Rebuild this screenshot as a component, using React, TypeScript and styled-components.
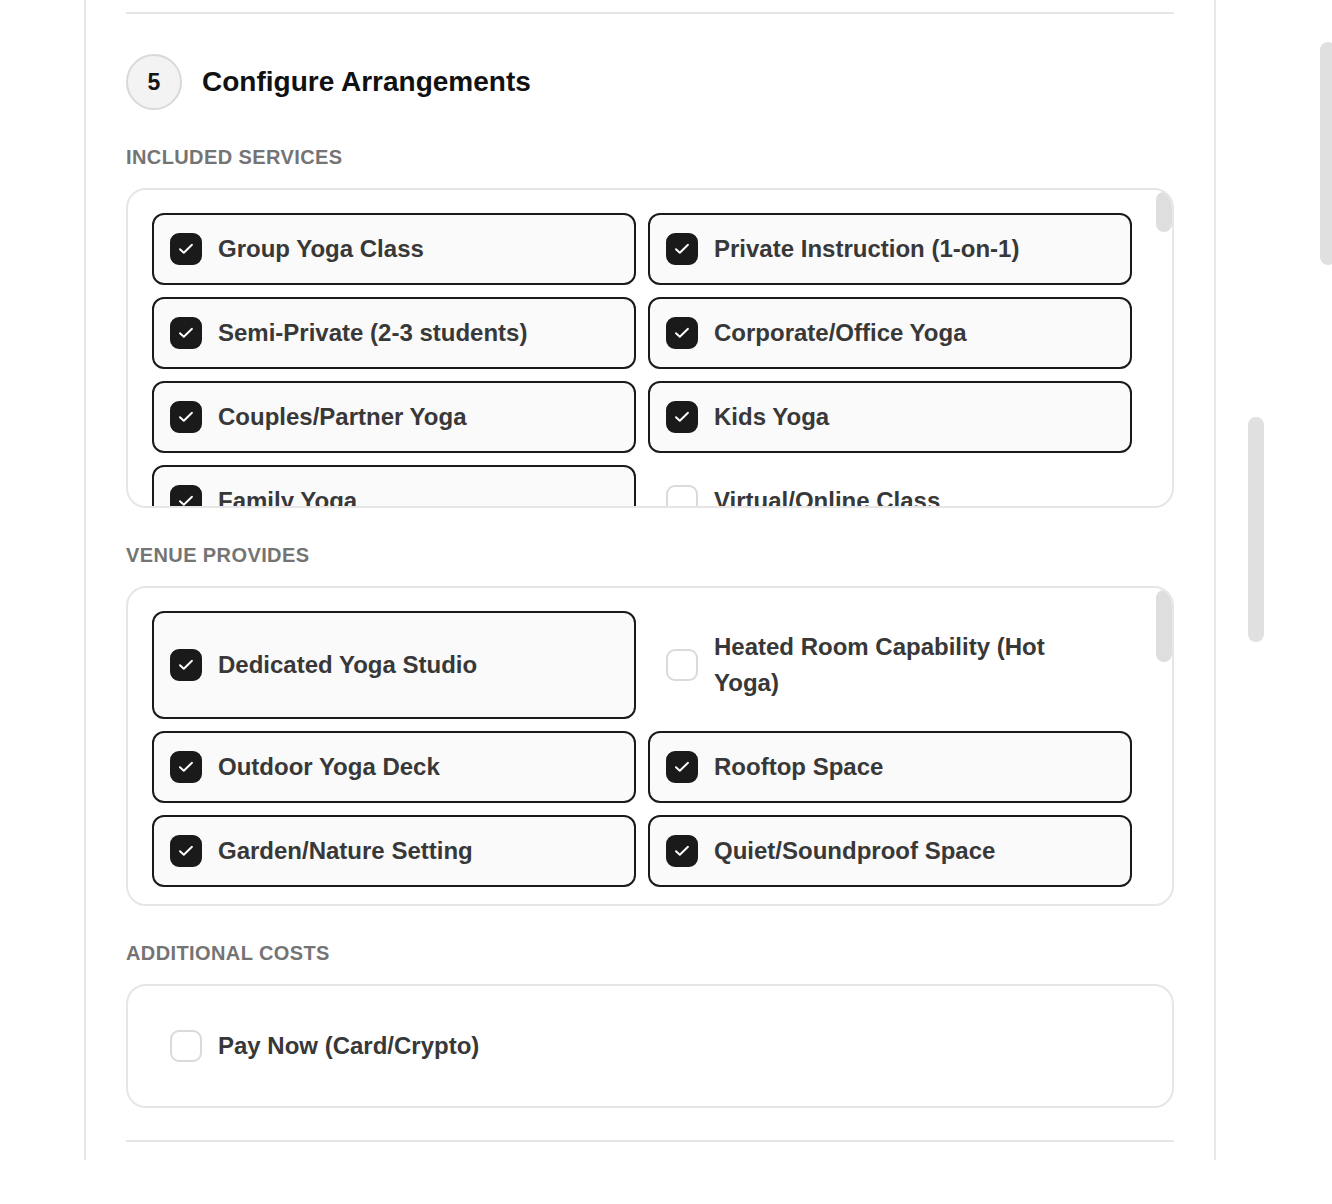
import React, { useState } from "react";
import styled, { createGlobalStyle } from "styled-components";

const GlobalStyle = createGlobalStyle`
  html, body {
    margin: 0;
    padding: 0;
    background: #fff;
  }
  body {
    font-family: "Liberation Sans", Arial, Helvetica, sans-serif;
    -webkit-font-smoothing: antialiased;
  }
  * {
    box-sizing: border-box;
  }
`;

const Page = styled.div`
  position: relative;
  height: 1204px;
  overflow: hidden;
  background: #fff;
`;

const Card = styled.div`
  margin-left: 84px;
  width: 1132px;
  height: 1160px;
  padding: 12px 40px 0;
  border-left: 2px solid #e8e8e8;
  border-right: 2px solid #e8e8e8;
  background: #fff;
`;

const Rule = styled.div`
  height: 2px;
  background: #e6e6e6;
`;

const Section = styled.section`
  padding: 40px 0 32px;
`;

const Header = styled.div`
  display: flex;
  align-items: center;
  gap: 20px;
  margin-bottom: 35px;
`;

const StepBadge = styled.div`
  display: flex;
  align-items: center;
  justify-content: center;
  width: 56px;
  height: 56px;
  border-radius: 50%;
  background: #f3f3f3;
  border: 2px solid #d9d9d9;
  font-size: 23px;
  font-weight: 700;
  color: #151515;
`;

const Title = styled.h2`
  margin: 0;
  font-size: 28px;
  font-weight: 700;
  color: #111;
`;

const Group = styled.div`
  & + & {
    margin-top: 35px;
  }
`;

const GroupLabel = styled.div`
  margin-bottom: 19px;
  font-size: 20px;
  line-height: 24px;
  font-weight: 700;
  text-transform: uppercase;
  letter-spacing: 0.4px;
  color: #747474;
`;

const OptionBox = styled.div<{ $scroll?: boolean }>`
  position: relative;
  border: 2px solid #e6e6e6;
  border-radius: 20px;
  overflow: hidden;
  height: ${({ $scroll }) => ($scroll ? "320px" : "auto")};
`;

const Scroller = styled.div<{ $scroll?: boolean }>`
  height: 100%;
  overflow-y: ${({ $scroll }) => ($scroll ? "auto" : "visible")};
  padding: ${({ $scroll }) => ($scroll ? "23px 40px 24px 24px" : "24px")};
  scrollbar-width: none;

  &::-webkit-scrollbar {
    display: none;
  }
`;

// custom scrollbar thumb drawn over the box edge
const BoxThumb = styled.div<{ $height: number }>`
  position: absolute;
  top: 2px;
  right: 0;
  width: 16px;
  height: ${({ $height }) => $height}px;
  border-radius: 8px;
  background: #dedede;
`;

const PaneThumb = styled.div<{ $left: number; $top: number; $height: number }>`
  position: absolute;
  left: ${({ $left }) => $left}px;
  top: ${({ $top }) => $top}px;
  width: 16px;
  height: ${({ $height }) => $height}px;
  border-radius: 8px;
  background: #e0e0e0;
`;

const OptionGrid = styled.div`
  display: grid;
  grid-template-columns: 1fr 1fr;
  gap: 12px;
`;

const Option = styled.label<{ $checked: boolean }>`
  display: flex;
  align-items: center;
  gap: 16px;
  padding: 16px;
  border: 2px solid ${({ $checked }) => ($checked ? "#1a1a1a" : "transparent")};
  border-radius: 12px;
  background: ${({ $checked }) => ($checked ? "#fafafa" : "transparent")};
  cursor: pointer;
  user-select: none;
`;

const Tick = styled.span<{ $checked: boolean }>`
  flex: 0 0 32px;
  display: flex;
  align-items: center;
  justify-content: center;
  width: 32px;
  height: 32px;
  border-radius: 9px;
  background: ${({ $checked }) => ($checked ? "#1a1a1a" : "#fff")};
  border: 2px solid ${({ $checked }) => ($checked ? "#1a1a1a" : "#dadada")};
`;

const OptionText = styled.span`
  font-size: 24px;
  line-height: 36px;
  font-weight: 700;
  color: #383838;
`;

type Item = { label: string; on: boolean };

const services: Item[] = [
  { label: "Group Yoga Class", on: true },
  { label: "Private Instruction (1-on-1)", on: true },
  { label: "Semi-Private (2-3 students)", on: true },
  { label: "Corporate/Office Yoga", on: true },
  { label: "Couples/Partner Yoga", on: true },
  { label: "Kids Yoga", on: true },
  { label: "Family Yoga", on: true },
  { label: "Virtual/Online Class", on: false },
  { label: "Prenatal Yoga", on: false },
  { label: "Senior/Chair Yoga", on: false },
];

const venue: Item[] = [
  { label: "Dedicated Yoga Studio", on: true },
  { label: "Heated Room Capability (Hot Yoga)", on: false },
  { label: "Outdoor Yoga Deck", on: true },
  { label: "Rooftop Space", on: true },
  { label: "Garden/Nature Setting", on: true },
  { label: "Quiet/Soundproof Space", on: true },
  { label: "Yoga Mats Provided", on: false },
  { label: "Sound System", on: false },
];

const costs: Item[] = [{ label: "Pay Now (Card/Crypto)", on: false }];

const CheckMark = () => (
  <svg width="20" height="20" viewBox="0 0 20 20" fill="none">
    <polyline
      points="4,10.2 7.8,13.8 16,5.8"
      stroke="#fff"
      strokeWidth="1.9"
      strokeLinecap="round"
      strokeLinejoin="round"
    />
  </svg>
);

const OptionList: React.FC<{ items: Item[]; thumb?: number }> = ({
  items,
  thumb,
}) => {
  const [checked, setChecked] = useState<boolean[]>(items.map((i) => i.on));
  const scroll = thumb !== undefined;

  const toggle = (idx: number) =>
    setChecked((prev) => prev.map((v, i) => (i === idx ? !v : v)));

  return (
    <OptionBox $scroll={scroll}>
      <Scroller $scroll={scroll}>
        <OptionGrid>
          {items.map((item, idx) => (
            <Option
              key={item.label}
              $checked={checked[idx]}
              onClick={() => toggle(idx)}
            >
              <Tick $checked={checked[idx]}>
                {checked[idx] && <CheckMark />}
              </Tick>
              <OptionText>{item.label}</OptionText>
            </Option>
          ))}
        </OptionGrid>
      </Scroller>
      {scroll && <BoxThumb $height={thumb} />}
    </OptionBox>
  );
};

const App: React.FC = () => {
  return (
    <Page>
      <GlobalStyle />
      <Card>
        <Rule />
        <Section>
          <Header>
            <StepBadge>5</StepBadge>
            <Title>Configure Arrangements</Title>
          </Header>

          <Group>
            <GroupLabel>Included Services</GroupLabel>
            <OptionList items={services} thumb={40} />
          </Group>

          <Group>
            <GroupLabel>Venue Provides</GroupLabel>
            <OptionList items={venue} thumb={72} />
          </Group>

          <Group>
            <GroupLabel>Additional Costs</GroupLabel>
            <OptionList items={costs} />
          </Group>
        </Section>
        <Rule />
      </Card>

      <PaneThumb $left={1248} $top={417} $height={225} />
      <PaneThumb $left={1320} $top={42} $height={223} />
    </Page>
  );
};

export default App;
